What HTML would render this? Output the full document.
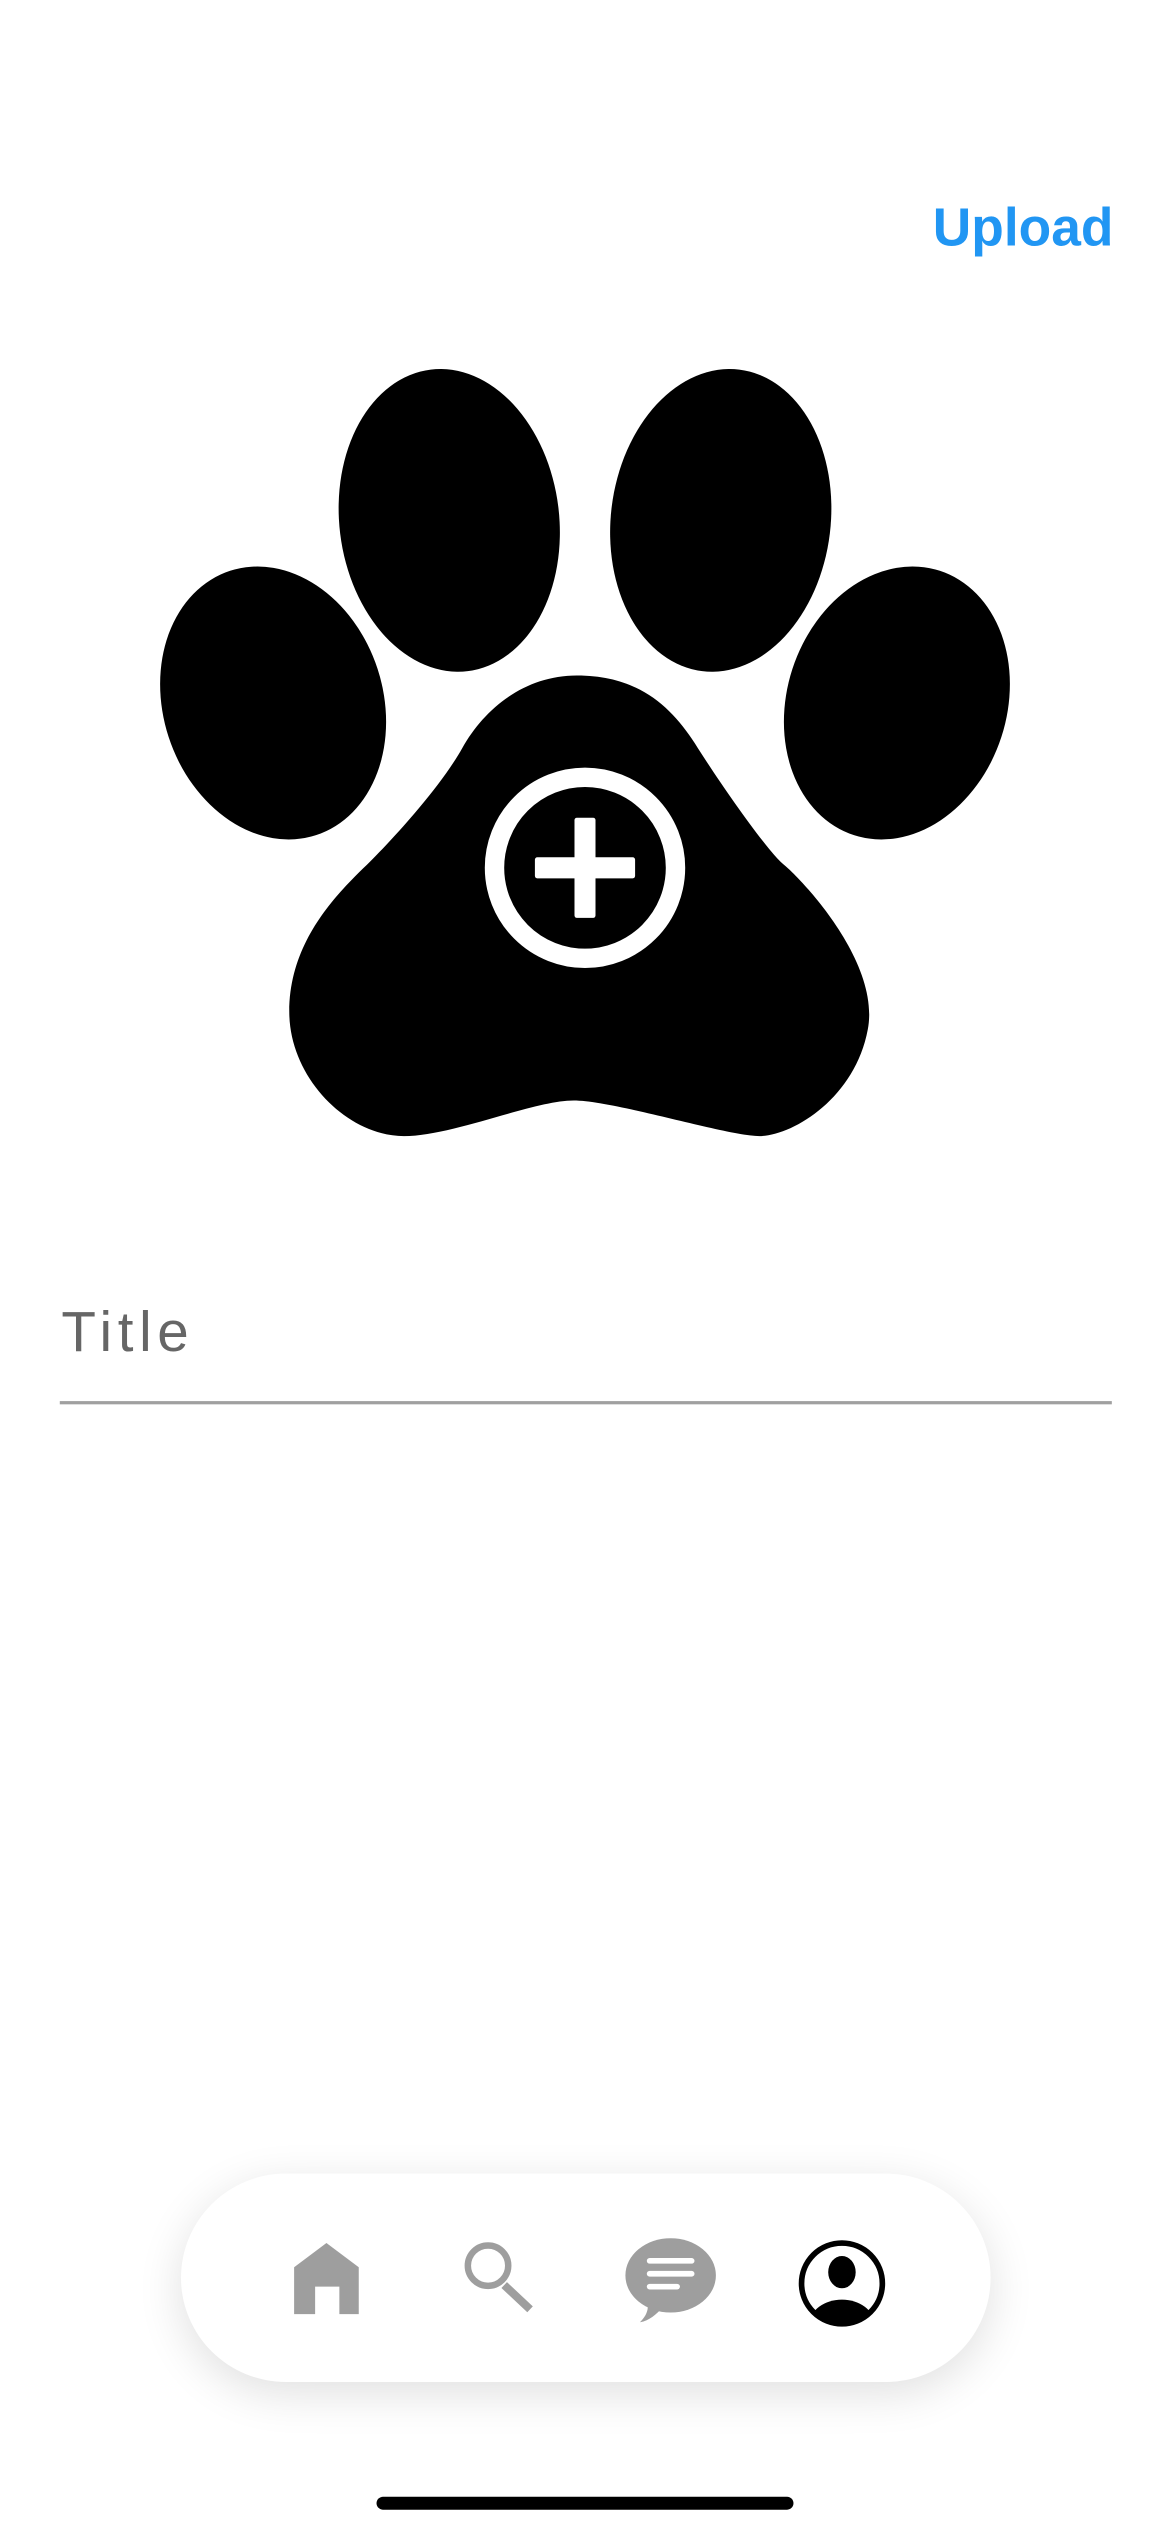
<!DOCTYPE html>
<html><head><meta charset="utf-8"><style>
html,body{margin:0;padding:0;background:#fff;width:1170px;height:2532px;overflow:hidden}
svg{display:block}
</style></head><body>
<svg width="1170" height="2532" viewBox="0 0 724 1566.8" xmlns="http://www.w3.org/2000/svg">
<defs>
<filter id="sh" x="-30%" y="-60%" width="160%" height="240%"><feGaussianBlur stdDeviation="14"/></filter>
<clipPath id="pc"><circle cx="521" cy="1413" r="24"/></clipPath>
</defs>
<text x="689" y="152" text-anchor="end" font-family="Liberation Sans, sans-serif" font-weight="bold" font-size="33" fill="#2196f3">Upload</text>
<!-- paw -->
<ellipse cx="169" cy="435" rx="68" ry="86" transform="rotate(-18 169 435)" fill="#000"/>
<ellipse cx="278" cy="322" rx="68" ry="94" transform="rotate(-7 278 322)" fill="#000"/>
<ellipse cx="446" cy="322" rx="68" ry="94" transform="rotate(7 446 322)" fill="#000"/>
<ellipse cx="555" cy="435" rx="68" ry="86" transform="rotate(18 555 435)" fill="#000"/>
<path d="M357 418 C395 418 415 437 430 460 C445 484 475 527 485 535 C495 543 545 595 537 637 C529 680 490 703 470 703 C450 703 380 681 355 681 C330 681 280 703 250 703 C215 703 179 667 179 626 C179 585 205 557 222 540 C240 523 272 488 286 463 C300 438 325 418 357 418 Z" fill="#000"/>
<circle cx="362" cy="537" r="56" fill="none" stroke="#fff" stroke-width="12"/>
<rect x="355.5" y="506" width="13" height="62" rx="1.5" fill="#fff"/>
<rect x="331" y="530.5" width="62" height="13" rx="1.5" fill="#fff"/>
<!-- title -->
<text x="38" y="836" font-family="Liberation Sans, sans-serif" font-size="35" letter-spacing="3.5" fill="#666">Title</text>
<rect x="37" y="867" width="651" height="2" fill="#a0a0a0"/>
<!-- tab bar -->
<rect x="112" y="1352" width="501" height="129" rx="65" fill="#000" opacity="0.12" filter="url(#sh)"/>
<rect x="112" y="1345" width="501" height="129" rx="65" fill="#fff"/>
<polygon points="202,1388 222,1403 222,1432 210,1432 210,1415 195,1415 195,1432 182,1432 182,1403" fill="#9e9e9e"/>
<circle cx="302" cy="1402" r="12.5" fill="none" stroke="#9e9e9e" stroke-width="4"/>
<line x1="312" y1="1414" x2="328" y2="1429" stroke="#9e9e9e" stroke-width="5"/>
<ellipse cx="415" cy="1408" rx="28" ry="23" fill="#9e9e9e"/>
<path d="M399 1420 C403 1428 400 1433 396 1437 C402 1436 406 1432 410 1428 Z" fill="#9e9e9e"/>
<g stroke="#fff" stroke-width="3.5" stroke-linecap="round">
<line x1="402" y1="1399" x2="428" y2="1399"/><line x1="402" y1="1407" x2="428" y2="1407"/><line x1="402" y1="1415" x2="419" y2="1415"/></g>
<circle cx="521" cy="1413" r="25" fill="none" stroke="#000" stroke-width="3.5"/>
<ellipse cx="521" cy="1406" rx="8.5" ry="10" fill="#000"/>
<g clip-path="url(#pc)"><ellipse cx="521" cy="1438" rx="20" ry="15" fill="#000"/></g>
<rect x="233" y="1545" width="258" height="8" rx="4" fill="#000"/>
</svg>
</body></html>
